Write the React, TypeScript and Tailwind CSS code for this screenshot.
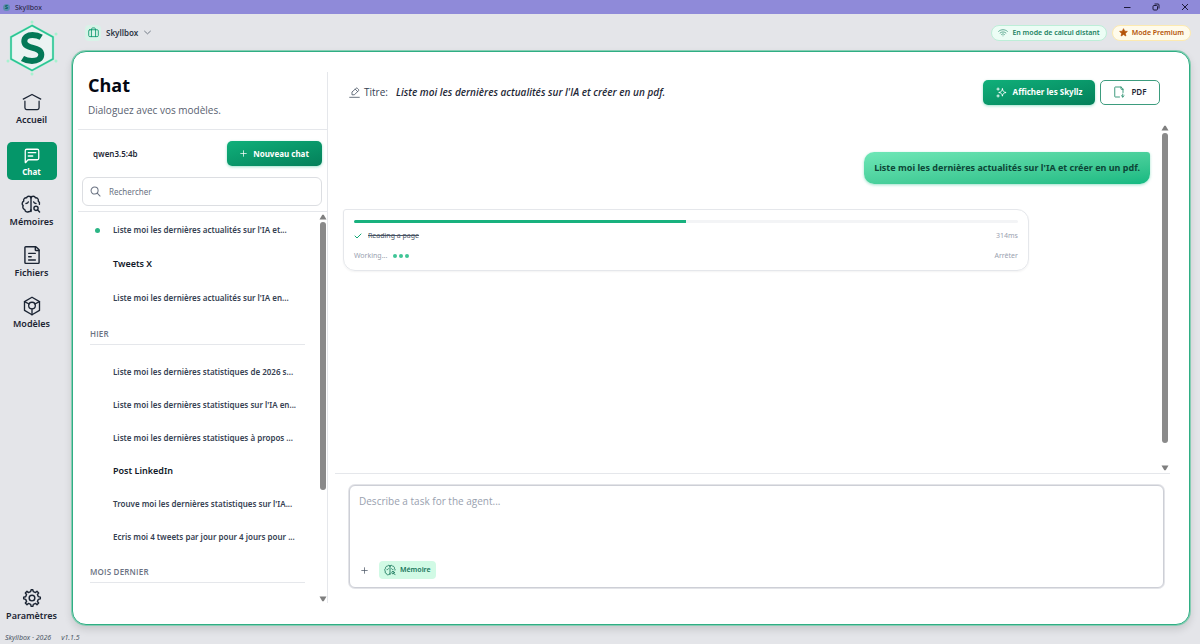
import React from "react";

type IconProps = { className?: string };

function Stroke({ className, width = 1.5, children }: IconProps & { width?: number; children: React.ReactNode }) {
  return (
    <svg
      viewBox="0 0 24 24"
      className={className}
      fill="none"
      stroke="currentColor"
      strokeWidth={width}
      strokeLinecap="round"
      strokeLinejoin="round"
      aria-hidden="true"
    >
      {children}
    </svg>
  );
}

const HomeIcon = ({ className }: IconProps) => (
  <Stroke className={className}>
    <path d="M1.500 8.500L12 3l10.500 5.500" />
    <path d="M20.500 11v8a2 2 0 0 1-2 2h-13a2 2 0 0 1-2-2v-8" />
  </Stroke>
);

const ChatIcon = ({ className }: IconProps) => (
  <Stroke className={className} width={1.7}>
    <path d="M3 20.300V5a2 2 0 0 1 2-2h14a2 2 0 0 1 2 2v10a2 2 0 0 1-2 2H7.600a2 2 0 0 0-1.500.7l-2.500 3c-.2.300-.6.100-.6-.4z" />
    <path d="M7 7.500h10M7 12h6" />
  </Stroke>
);

const BrainIcon = ({ className }: IconProps) => (
  <Stroke className={className} width={1.7}>
    <path d="M12 2.800V21" />
    <path d="M12 4.500A2.800 2.800 0 0 0 6.700 4.600 3 3 0 0 0 3.300 8.500 3.300 3.300 0 0 0 2.600 14a3.300 3.300 0 0 0 2 4.800A3 3 0 0 0 9 21.300c1.500 0 3-.9 3-2.500" />
    <path d="M12 4.500A2.800 2.800 0 0 1 17.300 4.600a3 3 0 0 1 3.400 3.900 3.300 3.300 0 0 1 1.400 3.800" />
    <path d="M8.800 9.500c-.3 1.300-1.300 1.900-2.800 1.900M15.200 9.500c.3 1.300 1.300 1.900 2.800 1.900" />
    <circle cx="18" cy="17.200" r="2.500" />
    <path d="M20 19.200l2.300 2.400" />
  </Stroke>
);

const FileIcon = ({ className }: IconProps) => (
  <Stroke className={className} width={1.7}>
    <path d="M3.500 21V3a1 1 0 0 1 1-1h11.800a1 1 0 0 1 .7.300l3.200 3.200a1 1 0 0 1 .3.700V21a1 1 0 0 1-1 1h-15a1 1 0 0 1-1-1z" />
    <path d="M16 2v4a.6.6 0 0 0 .6.600h4M8 10h8M8 14h3M8 18h8" />
  </Stroke>
);

const ModelIcon = ({ className }: IconProps) => (
  <Stroke className={className} width={1.6}>
    <path d="M12 1.500l9 5.200v10.600l-9 5.200-9-5.200V6.700z" />
    <circle cx="12" cy="11.500" r="4" />
    <path d="M3 6.700l5.600 2.900M21 6.700l-5.600 2.900M12 15.500v7" />
  </Stroke>
);

const GearIcon = ({ className }: IconProps) => (
  <Stroke className={className} width={1.7}>
    <circle cx="12" cy="12" r="3.400" />
    <path d="M19.620 10.400l-1.100-2.650L20 6l-2-2-1.740 1.480-2.700-1.110L12.940 2h-1.960l-.63 2.400-2.650 1.120L6 4 4 6l1.450 1.790-1.080 2.660L2 11v2l2.400.660 1.120 2.640L4 18l2 2 1.790-1.460 2.600 1.070L11 22h2l.6-2.390 2.660-1.100C16.700 18.830 18 20 18 20l2-2-1.480-1.750 1.090-2.650 2.390-.62V11z" />
  </Stroke>
);

const BriefcaseIcon = ({ className }: IconProps) => (
  <Stroke className={className} width={1.8}>
    <rect x="1.500" y="6" width="21" height="15" rx="2.500" />
    <path d="M7.500 6v15M16.500 6v15M8 6V4a2 2 0 0 1 2-2h4a2 2 0 0 1 2 2v2" />
  </Stroke>
);

const WifiIcon = ({ className }: IconProps) => (
  <Stroke className={className} width={1.6}>
    <path d="M1.500 8c6-5.300 15-5.300 21 0M5 12c4-3.600 10-3.600 14 0M8.500 15.500c2-1.900 5-1.900 7 0" />
    <path d="M12 18.800h.01" />
  </Stroke>
);

const PencilIcon = ({ className }: IconProps) => (
  <Stroke className={className} width={1.8}>
    <path d="M1.500 22.500h21" />
    <path d="M13.500 4.700L15.400 2.800a2 2 0 0 1 2.800 0l2.500 2.500a2 2 0 0 1 0 2.800L11.800 17H6.500v-5.300zM13.500 4.700l5.300 5.300" />
  </Stroke>
);

const SparklesIcon = ({ className }: IconProps) => (
  <Stroke className={className} width={2}>
    <path d="M14 4c.8 5.200 2.800 7.200 8 8-5.200.8-7.200 2.800-8 8-.8-5.200-2.800-7.200-8-8 5.200-.8 7.200-2.800 8-8z" />
    <path d="M4.500 2v5M2 4.500h5M4.500 17v5M2 19.500h5" />
  </Stroke>
);

const PdfIcon = ({ className }: IconProps) => (
  <Stroke className={className} width={1.7}>
    <path d="M13 22H4.500a1 1 0 0 1-1-1V3a1 1 0 0 1 1-1h11.300a1 1 0 0 1 .7.300l3.200 3.200a1 1 0 0 1 .3.700V13" />
    <path d="M16 2v4a.6.6 0 0 0 .6.600H20M19.500 16v6M16.800 19.400l2.700 2.600 2.700-2.600" />
  </Stroke>
);

const PlusIcon = ({ className }: IconProps) => (
  <Stroke className={className} width={2.500}>
    <path d="M2.500 12h19M12 2.500v19" />
  </Stroke>
);

const SearchIcon = ({ className }: IconProps) => (
  <Stroke className={className} width={2.200}>
    <circle cx="10" cy="10" r="7.700" />
    <path d="M15.700 15.700L22 22" />
  </Stroke>
);

const Logo = ({ className }: IconProps) => (
  <svg viewBox="0 0 52 56" className={className} aria-label="Skyllbox" role="img">
    <g fill="#a7f3d0">
      <circle cx="26" cy="2" r="1.500" />
      <circle cx="26" cy="54" r="1.500" />
      <circle cx="2" cy="41" r="1.500" />
      <circle cx="50" cy="41" r="1.500" />
      <circle cx="50" cy="14" r="1.500" />
    </g>
    <path d="M26 5.500L47 17v22L26 50.500 5 39V17z" fill="#ecf3f3" stroke="#a7f3d0" strokeWidth="2.400" />
    <path d="M26 5.500L47 17v22L26 50.500 5 39V17z" fill="none" stroke="#2cc295" strokeWidth="1.500" />
    <path
      d="M35.200 17.300C32.500 15.600 29.500 15 26.500 15c-4.800 0-8.200 2.200-8.200 6.200 0 8.800 17 4.600 17 13.300 0 4.300-4 6.500-9.300 6.500-3.500 0-6.700-.8-9.500-2.500"
      fill="none"
      stroke="#047857"
      strokeWidth="6"
    />
  </svg>
);

function ScrollBar({ thumb, className }: { thumb: string; className: string }) {
  return (
    <div className={`flex shrink-0 flex-col items-center text-[#7f7f7f] ${className}`} aria-hidden="true">
      <svg viewBox="0 0 8 6" className="h-1.5 w-2 shrink-0" fill="currentColor"><path d="M3.300.8h1.400L7.500 5.500H.5z" /></svg>
      <div className="flex w-full flex-1 justify-center py-0.5">
        <div className={`w-1.5 rounded-full bg-[#8a8a8a] ${thumb}`} />
      </div>
      <svg viewBox="0 0 8 6" className="h-1.5 w-2 shrink-0" fill="currentColor"><path d="M3.300 5.200h1.400L7.500.5H.5z" /></svg>
    </div>
  );
}

function NavItem({ label, icon, active }: { label: string; icon: React.ReactNode; active?: boolean }) {
  return (
    <a
      href="#"
      aria-current={active ? "page" : undefined}
      className={
        active
          ? "flex h-[38px] w-[50px] flex-col items-center justify-center rounded-[5px] bg-[#059669] pt-0.5 text-[8px] leading-3 font-bold text-white"
          : "flex h-[38px] flex-col items-center justify-center text-[9px] leading-4 font-semibold text-[#1b2433]"
      }
    >
      {icon}
      <span className={active ? "mt-px" : ""}>{label}</span>
    </a>
  );
}

function GroupTitle({ children }: { children: React.ReactNode }) {
  return (
    <h2 className="mr-3.5 mb-[10px] ml-3 border-b border-gray-200 pt-3 pb-[3px] font-['Open_Sans',sans-serif] text-[8px] leading-[14px] font-semibold tracking-wide text-gray-500">
      {children}
    </h2>
  );
}

function ChatRow({ text, strong, dot, tall }: { text: string; strong?: boolean; dot?: boolean; tall?: boolean }) {
  return (
    <li className={`flex items-center gap-[13px] pl-[17px] ${tall ? "h-[34px]" : "h-[33px]"}`}>
      <span className={`size-[5px] shrink-0 rounded-full ${dot ? "bg-[#2bb585]" : ""}`} />
      <a
        href="#"
        className={strong ? "text-[9px] font-semibold text-gray-900" : "text-[8px] font-semibold whitespace-nowrap text-[#364152]"}
      >
        {text}
      </a>
    </li>
  );
}

const today = [
  { text: "Liste moi les dernières actualités sur l'IA et...", dot: true },
  { text: "Tweets X", strong: true },
  { text: "Liste moi les dernières actualités sur l'IA en..." },
];

const yesterday = [
  { text: "Liste moi les dernières statistiques de 2026 s..." },
  { text: "Liste moi les dernières statistiques sur l'IA en..." },
  { text: "Liste moi les dernières statistiques à propos ..." },
  { text: "Post LinkedIn", strong: true },
  { text: "Trouve moi les dernières statistiques sur l'IA..." },
  { text: "Ecris moi 4 tweets par jour pour 4 jours pour ..." },
];

export default function App() {
  return (
    <div className="flex h-screen min-h-[600px] flex-col bg-[#e4e5e9] font-['Noto_Sans',sans-serif] text-[#1f2937]">
      <div className="flex h-[14px] shrink-0 items-center bg-[#8f8ad9] pr-[11px] pl-[3px] text-[#1e1b3a]">
        <span className="flex size-[7px] items-center justify-center rounded-full bg-[#5b8db0] text-[6px] font-bold text-[#065f5b]">S</span>
        <span className="ml-[5px] flex-1 text-[7px] leading-none">Skyllbox</span>
        <div className="flex items-center gap-[21px]">
          <button aria-label="Réduire"><svg viewBox="0 0 8 8" className="size-2" stroke="currentColor"><path d="M1 4.500h6.500" /></svg></button>
          <button aria-label="Restaurer">
            <svg viewBox="0 0 8 8" className="size-2" fill="none" stroke="currentColor"><rect x="1" y="2.500" width="4.500" height="4.500" rx="1" /><path d="M2.500 1H6a1 1 0 0 1 1 1v3.500" /></svg>
          </button>
          <button aria-label="Fermer"><svg viewBox="0 0 8 8" className="size-2" stroke="currentColor"><path d="M1 1l6 6M7 1L1 7" /></svg></button>
        </div>
      </div>

      <div className="flex min-h-0 flex-1">
        <nav className="flex w-[63px] shrink-0 flex-col items-center pt-[6px]">
          <Logo className="h-14 w-[52px]" />
          <div className="mt-[15px] flex flex-1 flex-col items-center gap-[13px]">
            <NavItem label="Accueil" icon={<HomeIcon className="size-5" />} />
            <NavItem label="Chat" active icon={<ChatIcon className="size-[18px]" />} />
            <NavItem label="Mémoires" icon={<BrainIcon className="size-5" />} />
            <NavItem label="Fichiers" icon={<FileIcon className="size-5" />} />
            <NavItem label="Modèles" icon={<ModelIcon className="size-5" />} />
          </div>
          <NavItem label="Paramètres" icon={<GearIcon className="size-5" />} />
        </nav>

        <div className="flex min-w-0 flex-1 flex-col pr-[9px] pl-2">
          <header className="flex h-[37px] shrink-0 items-center justify-between">
            <button className="flex items-center pl-[14px] text-[8px] font-semibold text-[#2c3646]">
              <span className="flex size-4 items-center justify-center rounded bg-[#d8f3e8] text-[#059669]">
                <BriefcaseIcon className="size-[11px]" />
              </span>
              <span className="ml-[5px]">Skyllbox</span>
              <Stroke className="ml-1.5 size-[7px] text-gray-600" width={2.500}><path d="M2 7.500l10 9 10-9" /></Stroke>
            </button>
            <div className="flex items-center gap-[5px] text-[7px] leading-[14px] font-semibold">
              <span className="flex items-center gap-1 rounded-full border border-[#bdeed8] bg-[#ecfdf5] px-1.5 text-[#1b8262]">
                <WifiIcon className="size-[10px]" />
                En mode de calcul distant
              </span>
              <span className="flex items-center gap-1 rounded-full border border-[#fdeab0] bg-[#fffbeb] px-1.5 text-[#b45309]">
                <svg viewBox="0 0 24 24" className="size-[9px]" fill="currentColor" stroke="currentColor" strokeWidth="2" strokeLinejoin="round"><path d="M12 1.800l3 6.700 7.300.7-5.500 4.900 1.600 7.200L12 17.500l-6.400 3.800 1.600-7.200-5.500-4.900 7.300-.7z" /></svg>
                Mode Premium
              </span>
            </div>
          </header>

          <main className="mx-px flex min-h-0 flex-1 rounded-[14px] border border-[#2fae84] bg-white pt-5 pr-[19px] pb-[21px] pl-[5px] shadow-[0_0_0_1px_#86cdb3,0_4px_8px_rgba(0,0,0,0.14)]">
            <aside className="flex w-[250px] shrink-0 flex-col border-r border-gray-200">
              <div className="h-[58px] shrink-0 border-b border-gray-200 pl-[10px]">
                <h1 className="font-['Open_Sans',sans-serif] text-[18px] leading-[26px] font-bold text-gray-950">Chat</h1>
                <p className="font-['Open_Sans',sans-serif] text-[10px] leading-6 font-medium text-[#586170]">Dialoguez avec vos modèles.</p>
              </div>
              <div className="flex shrink-0 flex-col gap-[11px] border-b border-gray-200 pt-[11px] pr-[5px] pb-[5px] pl-1">
                <div className="flex items-center justify-between pl-[11px]">
                  <span className="text-[8px] font-semibold">qwen3.5:4b</span>
                  <button className="flex h-[25px] w-[95px] items-center justify-center gap-1.5 rounded-[5px] bg-linear-to-br from-[#10b07a] to-[#04805a] text-[8px] font-bold text-white shadow-[0_1px_3px_rgba(16,185,129,0.4)]">
                    <PlusIcon className="size-[7px]" />
                    Nouveau chat
                  </button>
                </div>
                <label className="flex h-[29px] items-center gap-2 rounded-md border border-[#dcdee2] px-[7px] text-gray-500">
                  <SearchIcon className="size-[11px]" />
                  <input type="search" aria-label="Rechercher" placeholder="Rechercher" className="min-w-0 flex-1 text-[8px] outline-none placeholder:text-gray-500" />
                </label>
              </div>
              <div className="flex min-h-0 flex-1">
                <div className="min-w-0 flex-1 overflow-hidden pt-px">
                  <ul>{today.map((row) => <ChatRow key={row.text} {...row} tall />)}</ul>
                  <GroupTitle>HIER</GroupTitle>
                  <ul>{yesterday.map((row) => <ChatRow key={row.text} {...row} />)}</ul>
                  <GroupTitle>MOIS DERNIER</GroupTitle>
                </div>
                <ScrollBar className="w-2 pt-0.5 pb-px" thumb="h-[72%]" />
              </div>
            </aside>

            <section className="flex min-w-0 flex-1 flex-col pl-[7px]">
              <div className="flex h-10 shrink-0 items-center pr-[10px] pl-[14px] font-['Open_Sans',sans-serif] text-[10px]">
                <PencilIcon className="size-[11px] text-gray-600" />
                <span className="ml-1 font-medium text-gray-700">Titre:</span>
                <h2 className="ml-2 flex-1 font-semibold italic">Liste moi les dernières actualités sur l'IA et créer en un pdf.</h2>
                <button className="flex h-[25px] w-28 items-center justify-center gap-1.5 rounded-[5px] bg-linear-to-br from-[#10b07a] to-[#04805a] font-['Noto_Sans',sans-serif] text-[8px] font-bold text-white shadow-[0_1px_3px_rgba(16,185,129,0.4)]">
                  <SparklesIcon className="size-[11px]" />
                  Afficher les Skyllz
                </button>
                <button className="ml-[5px] flex h-[25px] w-[60px] items-center justify-center gap-1.5 rounded-[5px] border border-[#3d9c7e] font-['Noto_Sans',sans-serif] text-[8px] font-semibold">
                  <PdfIcon className="size-3 text-[#1d8a67]" />
                  PDF
                </button>
              </div>

              <div className="mt-3 flex min-h-0 flex-1 border-b border-gray-200">
                <div className="min-w-0 flex-1 pt-[28px] pr-[10px] pl-2">
                  <div className="flex justify-end">
                    <p className="rounded-[10px] rounded-tr-[3px] bg-linear-to-br from-[#6ee7b7] to-[#10b981] px-2.5 text-[9px] leading-8 font-bold text-[#0d4637] shadow-[0_1px_3px_rgba(16,185,129,0.4)]">
                      Liste moi les dernières actualités sur l'IA et créer en un pdf.
                    </p>
                  </div>
                  <div className="mt-[25px] w-[85%] rounded-[3px_12px_12px_12px] border border-gray-200 px-2.5 pt-2.5 pb-1 text-[7px] text-gray-400 shadow-xs">
                    <div className="h-[3px] overflow-hidden rounded-full bg-gray-100"><div className="h-full w-1/2 bg-[#18b17e]" /></div>
                    <div className="mt-[3px] flex h-5 items-center">
                      <Stroke className="size-2 text-[#12a876]" width={3}><path d="M3 12l6 6L21 6" /></Stroke>
                      <span className="ml-1.5 flex-1 text-gray-600 line-through">Reading a page</span>
                      <span>314ms</span>
                    </div>
                    <div className="flex h-5 items-center">
                      <span>Working...</span>
                      <span className="ml-1.5 flex flex-1 gap-0.5"><i className="size-1 rounded-full bg-[#3fc596]" /><i className="size-1 rounded-full bg-[#3fc596]" /><i className="size-1 rounded-full bg-[#3fc596]" /></span>
                      <button>Arrêter</button>
                    </div>
                  </div>
                </div>
                <ScrollBar className="w-[10px] pt-px pb-0.5" thumb="h-[94%]" />
              </div>

              <form className="mt-[11px] mr-1.5 mb-[15px] ml-[14px] flex h-[103px] shrink-0 flex-col rounded-md border border-[#cdcfd6] bg-white px-2 pt-[3px] pb-2 ring-1 ring-[#e3e4e8]">
                <textarea aria-label="Message" placeholder="Describe a task for the agent..." className="w-full flex-1 resize-none px-px pt-1 font-['Open_Sans',sans-serif] text-[10px] leading-4 font-medium outline-none placeholder:text-gray-400" />
                <div className="flex items-center">
                  <button type="button" aria-label="Ajouter" className="px-[3px] text-gray-600"><PlusIcon className="size-[7px]" /></button>
                  <button type="button" className="ml-2 flex h-[18px] items-center gap-1 rounded bg-[#d1fae5] px-[5px] text-[7px] font-semibold text-[#17755a]">
                    <BrainIcon className="size-3" />
                    Mémoire
                  </button>
                </div>
              </form>
            </section>
          </main>
        </div>
      </div>

      <footer className="flex h-[19px] shrink-0 items-center gap-2.5 pt-1.5 pl-[5px] text-[7px] leading-none text-gray-600 italic">
        <span>Skyllbox · 2026</span>
        <span>v1.1.5</span>
      </footer>
    </div>
  );
}
